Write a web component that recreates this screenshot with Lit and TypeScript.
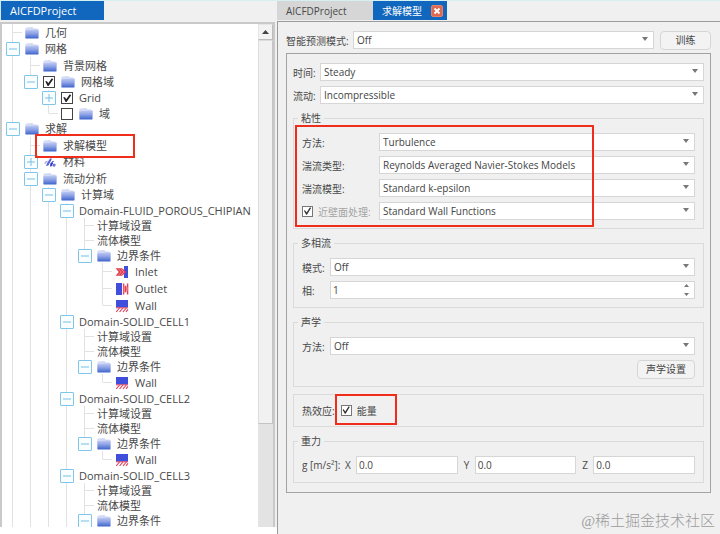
import { LitElement, html, css, svg, nothing } from "lit";
import { customElement, property } from "lit/decorators.js";
import { classMap } from "lit/directives/class-map.js";

type IconName = "folder" | "material" | "inlet" | "outlet" | "wall";
type Size = "short" | "mid" | "tall";

interface TreeRow {
  /** One character per ancestor column: "|" draws a guide, " " leaves it blank. */
  guides: string;
  /** Shape of the guide in the row's own column. */
  own: "tee" | "elbow";
  label: string;
  size: Size;
  toggle?: "plus" | "minus";
  check?: boolean;
  icon?: IconName;
}

const domain = (name: string, parts: Array<[IconName, string]>): TreeRow[] => [
  { guides: "|||", own: "tee", label: name, size: "short", toggle: "minus" },
  { guides: "||||", own: "tee", label: "计算域设置", size: "short" },
  { guides: "||||", own: "tee", label: "流体模型", size: "short" },
  { guides: "||||", own: "elbow", label: "边界条件", size: "short", toggle: "minus", icon: "folder" },
  ...parts.map(
    ([icon, label], i): TreeRow => ({
      guides: "|||| ",
      own: i === parts.length - 1 ? "elbow" : "tee",
      label,
      size: "tall",
      icon,
    }),
  ),
];

const ROWS: TreeRow[] = [
  { guides: "", own: "tee", label: "几何", size: "tall", icon: "folder" },
  { guides: "", own: "tee", label: "网格", size: "mid", toggle: "minus", icon: "folder" },
  { guides: "|", own: "tee", label: "背景网格", size: "tall", icon: "folder" },
  { guides: "|", own: "elbow", label: "网格域", size: "mid", toggle: "minus", check: true, icon: "folder" },
  { guides: "| ", own: "tee", label: "Grid", size: "mid", toggle: "plus", check: true },
  { guides: "| ", own: "elbow", label: "域", size: "short", check: false, icon: "folder" },
  { guides: "", own: "tee", label: "求解", size: "mid", toggle: "minus", icon: "folder" },
  { guides: "|", own: "tee", label: "求解模型", size: "tall", icon: "folder" },
  { guides: "|", own: "tee", label: "材料", size: "mid", toggle: "plus", icon: "material" },
  { guides: "|", own: "tee", label: "流动分析", size: "tall", toggle: "minus", icon: "folder" },
  { guides: "||", own: "tee", label: "计算域", size: "mid", toggle: "minus", icon: "folder" },
  ...domain("Domain-FLUID_POROUS_CHIPIAN", [
    ["inlet", "Inlet"],
    ["outlet", "Outlet"],
    ["wall", "Wall"],
  ]),
  ...domain("Domain-SOLID_CELL1", [["wall", "Wall"]]),
  ...domain("Domain-SOLID_CELL2", [["wall", "Wall"]]),
  ...domain("Domain-SOLID_CELL3", []),
];

const ICONS = {
  folder: svg`
    <defs><linearGradient id="f" x1="0" y1="0" x2="0" y2="1">
      <stop offset="0" stop-color="#c3cdf3"/><stop offset=".45" stop-color="#8ea3e6"/><stop offset="1" stop-color="#3c62cc"/>
    </linearGradient></defs>
    <path d="M.4 2.6 Q.4 1.4 1.6 1.4 L7.4 1 L8.8 2.6 L12.4 2.6 L12.8 5 L.6 5Z" fill="#d3daf5"/>
    <path d="M.2 4.2 L8 3.8 L9.2 3.2 L13.8 3.4 L13.5 12 Q13.4 12.6 12.7 12.6 L1.2 12.6 Q.5 12.6 .4 12Z" fill="url(#f)"/>`,
  material: svg`
    <path d="M2 8.6 Q2.4 6.4 4.6 6.6" stroke="#aab0ec" stroke-width="1.6" fill="none"/>
    <path d="M3 11 L4 8.6 L7 3.4 L8.6 3.2 L8.4 5 L5.4 10.4Z" fill="#5a62da"/>
    <path d="M7 11.4 L7.4 8.4 L9.4 6.6 L10 8.2 L8.6 11.2Z" fill="#2c38c6"/>
    <path d="M9 6.8 L10.8 6.4 M9.8 10.8 Q10.2 8.6 12 9.2 Q12.8 10.6 11.4 11.2Z" stroke="#5660d8" stroke-width="1" fill="#8f97e6"/>`,
  inlet: svg`
    <rect x="9" y="1" width="4" height="12" fill="#3f4fdc"/>
    <path d="M.6 3.2 H7 L11.4 7 L7 10.8 H.6 L3.8 7Z" fill="#e03a4c"/>
    <path d="M3.4 4 L6.4 7 L3.4 10 M6.2 4 L9 7 L6.2 10" fill="none" stroke="#f3a8b2" stroke-width=".7"/>`,
  outlet: svg`
    <rect x="1" y="1" width="6" height="12" fill="#3f4fdc"/>
    <path d="M8.6 1.4 V12.6 M12.6 1.4 V12.6" stroke="#e03a4c" stroke-width="1.4"/>
    <path d="M8.6 3.4 L12.6 5 V9 L8.6 10.8Z" fill="#ec8a96"/>
    <path d="M10.6 3.6 V10.4" stroke="#e03a4c" stroke-width="1"/>`,
  wall: svg`
    <rect x="1" y="1" width="12" height="7.4" fill="#3f4fdc"/>
    <path d="M1 8.8 H13" stroke="#d93a5c" stroke-width="1"/>
    <path d="M1.2 12.8 L4.6 9 M4.6 12.8 L8 9 M8 12.8 L11.4 9 M11 12.8 L13 10.4" stroke="#e0405a" stroke-width="1.1" fill="none"/>`,
};

@customElement("model-tree")
export class ModelTree extends LitElement {
  static styles = css`
    :host { display: block; min-width: 0; overflow: hidden; background: #fff; }
    .tree { list-style: none; margin: 0; padding: 0 0 0 2px; }
    .row { display: flex; color: #484848; white-space: nowrap; }
    .short { height: 15px; line-height: 15px; }
    .mid { height: 16px; line-height: 16px; }
    .tall { height: 17px; line-height: 17px; }
    .cell { flex: none; width: 18px; display: grid; place-items: center; --line: #e2e2e2; }
    .guide, .tee { background: linear-gradient(var(--line), var(--line)) 8px 0 / 1px 100% no-repeat; }
    .elbow { background: linear-gradient(var(--line), var(--line)) 8px 0 / 1px 50% no-repeat; }
    .arm::after { content: ""; width: 9px; height: 1px; background: #e2e2e2; justify-self: end; }
    .toggle {
      width: 14px; height: 14px; padding: 0; border: 1px solid #7fc6ea; border-radius: 1px;
      background: #fbfeff; display: grid; place-items: center;
    }
    .toggle svg { display: block; }
    .body { display: flex; align-items: center; gap: 6px; padding-left: 3px; }
    .icon { display: block; width: 14px; height: 14px; }
    .check {
      appearance: none; margin: 0; width: 12px; height: 12px; border: 1px solid #444; background: #fff;
      display: grid; place-items: center;
    }
    .check:checked::after {
      content: ""; width: 10px; height: 10px; background: #222;
      clip-path: polygon(12% 42%, 30% 42%, 42% 62%, 78% 12%, 92% 22%, 46% 90%, 36% 90%);
    }
  `;

  render() {
    return html`<ul class="tree">${ROWS.map((row) => this.row(row))}</ul>`;
  }

  private row(r: TreeRow) {
    const own = { cell: true, [r.own]: true, arm: !r.toggle };
    return html`<li class="row ${r.size}">
      ${[...r.guides].map((g) => html`<span class="cell ${g === "|" ? "guide" : ""}"></span>`)}
      <span class=${classMap(own)}>${r.toggle ? this.toggle(r) : nothing}</span>
      <label class="body">
        ${r.check === undefined ? nothing : html`<input class="check" type="checkbox" .checked=${r.check} />`}
        ${r.icon ? html`<svg class="icon" viewBox="0 0 14 14" aria-hidden="true">${ICONS[r.icon]}</svg>` : nothing}
        <span>${r.label}</span>
      </label>
    </li>`;
  }

  private toggle(r: TreeRow) {
    return html`<button class="toggle" aria-label=${r.label}>
      <svg width="12" height="12" viewBox="0 0 12 12">
        <path d=${r.toggle === "plus" ? "M2 6H10M6 2V10" : "M2 6H10"} stroke="#74bfe6" fill="none" />
      </svg>
    </button>`;
  }
}

@customElement("combo-box")
export class ComboBox extends LitElement {
  @property() value = "";
  @property() label = "";

  static styles = css`
    :host { display: grid; flex: 1; min-width: 0; }
    .select, .arrow { grid-area: 1 / 1; }
    .select {
      appearance: none; width: 100%; height: 18px; margin: 0; padding: 0 16px 0 3px; box-sizing: border-box;
      border: 1px solid #d6d6d6; border-radius: 0; background: #fff; font: inherit; color: #444;
    }
    .arrow { place-self: center end; margin: 0 6px 2px 0; pointer-events: none; }
  `;

  render() {
    return html`<select class="select" aria-label=${this.label}><option>${this.value}</option></select>
      <svg class="arrow" width="6" height="4" viewBox="0 0 6 4"><path d="M0 0H6L3 4Z" fill="#777" /></svg>`;
  }
}

@customElement("app-root")
export class AppRoot extends LitElement {
  static styles = css`
    :host {
      display: grid; grid-template-columns: 277px minmax(0, 1fr); position: relative; box-sizing: border-box;
      min-height: 100vh; border-top: 1px solid #d4f0f2; background: #fff;
      font-family: "Open Sans", "Noto Sans CJK SC", sans-serif;
    }
    .left {
      display: flex; flex-direction: column; height: calc(100vh - 8px); background: #f0f0f0; font-size: 11px;
      min-width: 0; overflow: hidden; position: relative;
    }
    .tabs { display: flex; flex: none; height: 20px; }
    .tab {
      border: 0; padding: 0 9px; font: inherit; color: #484848; text-align: left; line-height: 18px; height: 19px;
      background: #d6d6d6;
    }
    .left .tab { width: 104px; border-left: 1px solid #d4e6f4; }
    .left .tabs { height: 21px; }
    .right .tab.first { width: 96px; }
    .tab.active { background: #1167bd; color: #fff; }
    .tab.closable { width: 74px; display: flex; align-items: center; justify-content: space-between; padding: 0 4px 0 9px; }
    .close { display: block; }
    .treebox {
      flex: 1; min-height: 0; display: grid; grid-template-columns: minmax(0, 1fr) 15px; overflow: hidden;
      border: solid #c9c9c9; border-width: 2px 2px 0 2px; margin-right: 2px;
    }
    .scroll { background: #e3e3e3; display: flex; flex-direction: column; }
    .up {
      height: 16px; padding: 0; border: 1px solid #e6e6e6; border-right-color: #bdbdbd; border-bottom-color: #bdbdbd;
      background: #f3f3f3; display: grid; place-items: center;
    }
    .thumb { height: 76%; background: #f1f1f1; border: 1px solid #dcdcdc; border-right-color: #c4c4c4; border-bottom-color: #c4c4c4; }

    .right { background: #f0f0f0; font-size: 10px; color: #484848; min-width: 0; display: flex; flex-direction: column; }
    .page {
      flex: 1; border: solid #9b9b9b; border-width: 1px 0 0 1px; padding: 9px 9px 0 8px;
      display: flex; flex-direction: column; gap: 4px;
    }
    .line { display: flex; align-items: center; height: 18px; gap: 6px; white-space: nowrap; }
    .line > label { flex: none; }
    .w1 { width: 61px; }
    .w2 { width: 21px; }
    .w3 { width: 22px; }
    .w4 { width: 71px; }
    .btn {
      height: 19px; box-sizing: border-box; padding: 0 8px; border: 1px solid #d6d6d6; border-radius: 4px;
      background: #f3f3f3; font: inherit; color: #444; line-height: 16px;
    }
    .train { width: 51px; }
    .frame {
      border: 1px solid #a2a2a2; padding: 9px 6px 9px; display: flex; flex-direction: column; gap: 7px;
    }
    .rows { display: flex; flex-direction: column; gap: 5px; }
    .group { margin: 0; min-width: 0; border: 1px solid #dadada; padding: 8px 8px; }
    .legend { padding: 0 3px; margin-left: -4px; height: 14px; line-height: 14px; }
    .heat { padding: 6px 8px 7px; }
    .end { justify-content: flex-end; }
    .muted { color: #a4a4a4; }
    .opt { display: flex; align-items: center; gap: 5px; }
    .check {
      appearance: none; margin: 0; width: 11px; height: 11px; box-sizing: border-box; border: 1px solid #777;
      background: #fff; display: grid; place-items: center;
    }
    .check:checked::after {
      content: ""; width: 9px; height: 9px; background: #333;
      clip-path: polygon(10% 48%, 22% 42%, 40% 68%, 78% 8%, 90% 16%, 44% 92%, 36% 92%);
    }
    .text {
      flex: 1; min-width: 0; width: 100%; height: 18px; box-sizing: border-box; margin: 0; padding: 0 2px; border: 1px solid #d6d6d6;
      background: #fff; font: inherit; color: #444; appearance: textfield;
    }
    .text::-webkit-inner-spin-button { display: none; }
    .spin { flex: 1; display: grid; }
    .spin > * { grid-area: 1 / 1; }
    .arrows { place-self: center end; margin-right: 6px; pointer-events: none; }
    .axis { flex: 1; display: flex; align-items: center; gap: 4px; min-width: 0; }
    .axis label { width: 7px; }
    .unit { width: 37px; }
    .mark { position: absolute; border: 2px solid #f02c1a; pointer-events: none; box-sizing: border-box; }
    .mark-tree { left: 35px; top: 133px; width: 100px; height: 24px; }
    .over { position: relative; }
    .mark-visc { left: -7px; right: 101px; top: -8px; bottom: -7px; }
    .mark-heat { left: 33px; top: -7px; width: 62px; height: 31px; }
    .water {
      position: absolute; right: 5px; bottom: 3px; color: #9c9c9c; font: 300 15px/20px "Liberation Serif", "Noto Sans CJK SC", serif;
    }
  `;

  render() {
    return html`
      <section class="left">
        <div class="tabs"><button class="tab active">AICFDProject</button></div>
        <div class="treebox">
          <model-tree></model-tree>
          <div class="scroll">
            <button class="up" aria-label="▲">
              <svg width="7" height="4" viewBox="0 0 7 4"><path d="M0 4H7L3.5 0Z" fill="#444" /></svg>
            </button>
            <div class="thumb"></div>
          </div>
        </div>
        <div class="mark mark-tree"></div>
      </section>
      <section class="right">
        <div class="tabs">
          <button class="tab first">AICFDProject</button>
          <button class="tab active closable">
            <span>求解模型</span>
            <svg class="close" width="12" height="12" viewBox="0 0 12 12">
              <rect x=".5" y=".5" width="11" height="11" rx="1.5" fill="#dc6a50" stroke="#e8806a" />
              <path d="M3.5 3.5L8.5 8.5M8.5 3.5L3.5 8.5" stroke="#fff" stroke-width="1.8" />
            </svg>
          </button>
        </div>
        <form class="page">
          <div class="line">
            <label class="w1">智能预测模式:</label>
            <combo-box label="智能预测模式" value="Off"></combo-box>
            <button type="button" class="btn train">训练</button>
          </div>
          <div class="frame">
            <div class="rows">
              ${this.combo("时间", "Steady", "w2")} ${this.combo("流动", "Incompressible", "w2")}
            </div>
            <fieldset class="group">
              <legend class="legend">粘性</legend>
              <div class="rows over">
                ${this.combo("方法", "Turbulence", "w4")}
                ${this.combo("湍流类型", "Reynolds Averaged Navier-Stokes Models", "w4")}
                ${this.combo("湍流模型", "Standard k-epsilon", "w4")}
                <div class="line">
                  <label class="w4 opt muted"><input class="check" type="checkbox" checked />近壁面处理:</label>
                  <combo-box label="近壁面处理" value="Standard Wall Functions"></combo-box>
                </div>
                <div class="mark mark-visc"></div>
              </div>
            </fieldset>
            <fieldset class="group">
              <legend class="legend">多相流</legend>
              <div class="rows">
                ${this.combo("模式", "Off", "w3")}
                <div class="line">
                  <label class="w3" for="phase">相:</label>
                  <span class="spin">
                    <input id="phase" class="text" type="number" value="1" />
                    <svg class="arrows" width="5" height="12" viewBox="0 0 5 12">
                      <path d="M0 3H5L2.5 0ZM0 9H5L2.5 12Z" fill="#777" />
                    </svg>
                  </span>
                </div>
              </div>
            </fieldset>
            <fieldset class="group">
              <legend class="legend">声学</legend>
              <div class="rows">
                ${this.combo("方法", "Off", "w3")}
                <div class="line end"><button type="button" class="btn">声学设置</button></div>
              </div>
            </fieldset>
            <div class="group heat">
              <div class="line over">
                <span>热效应:</span>
                <label class="opt"><input class="check" type="checkbox" checked />能量</label>
                <div class="mark mark-heat"></div>
              </div>
            </div>
            <fieldset class="group">
              <legend class="legend">重力</legend>
              <div class="line">
                <span class="unit">g [m/s²]:</span>
                ${["X", "Y", "Z"].map(
                  (a) => html`<span class="axis">
                    <label for="g${a}">${a}</label><input id="g${a}" class="text" type="text" value="0.0" />
                  </span>`,
                )}
              </div>
            </fieldset>
          </div>
        </form>
      </section>
      <div class="water">@稀土掘金技术社区</div>
    `;
  }

  private combo(label: string, value: string, width: string) {
    return html`<div class="line">
      <label class=${width}>${label}:</label>
      <combo-box label=${label} value=${value}></combo-box>
    </div>`;
  }
}
